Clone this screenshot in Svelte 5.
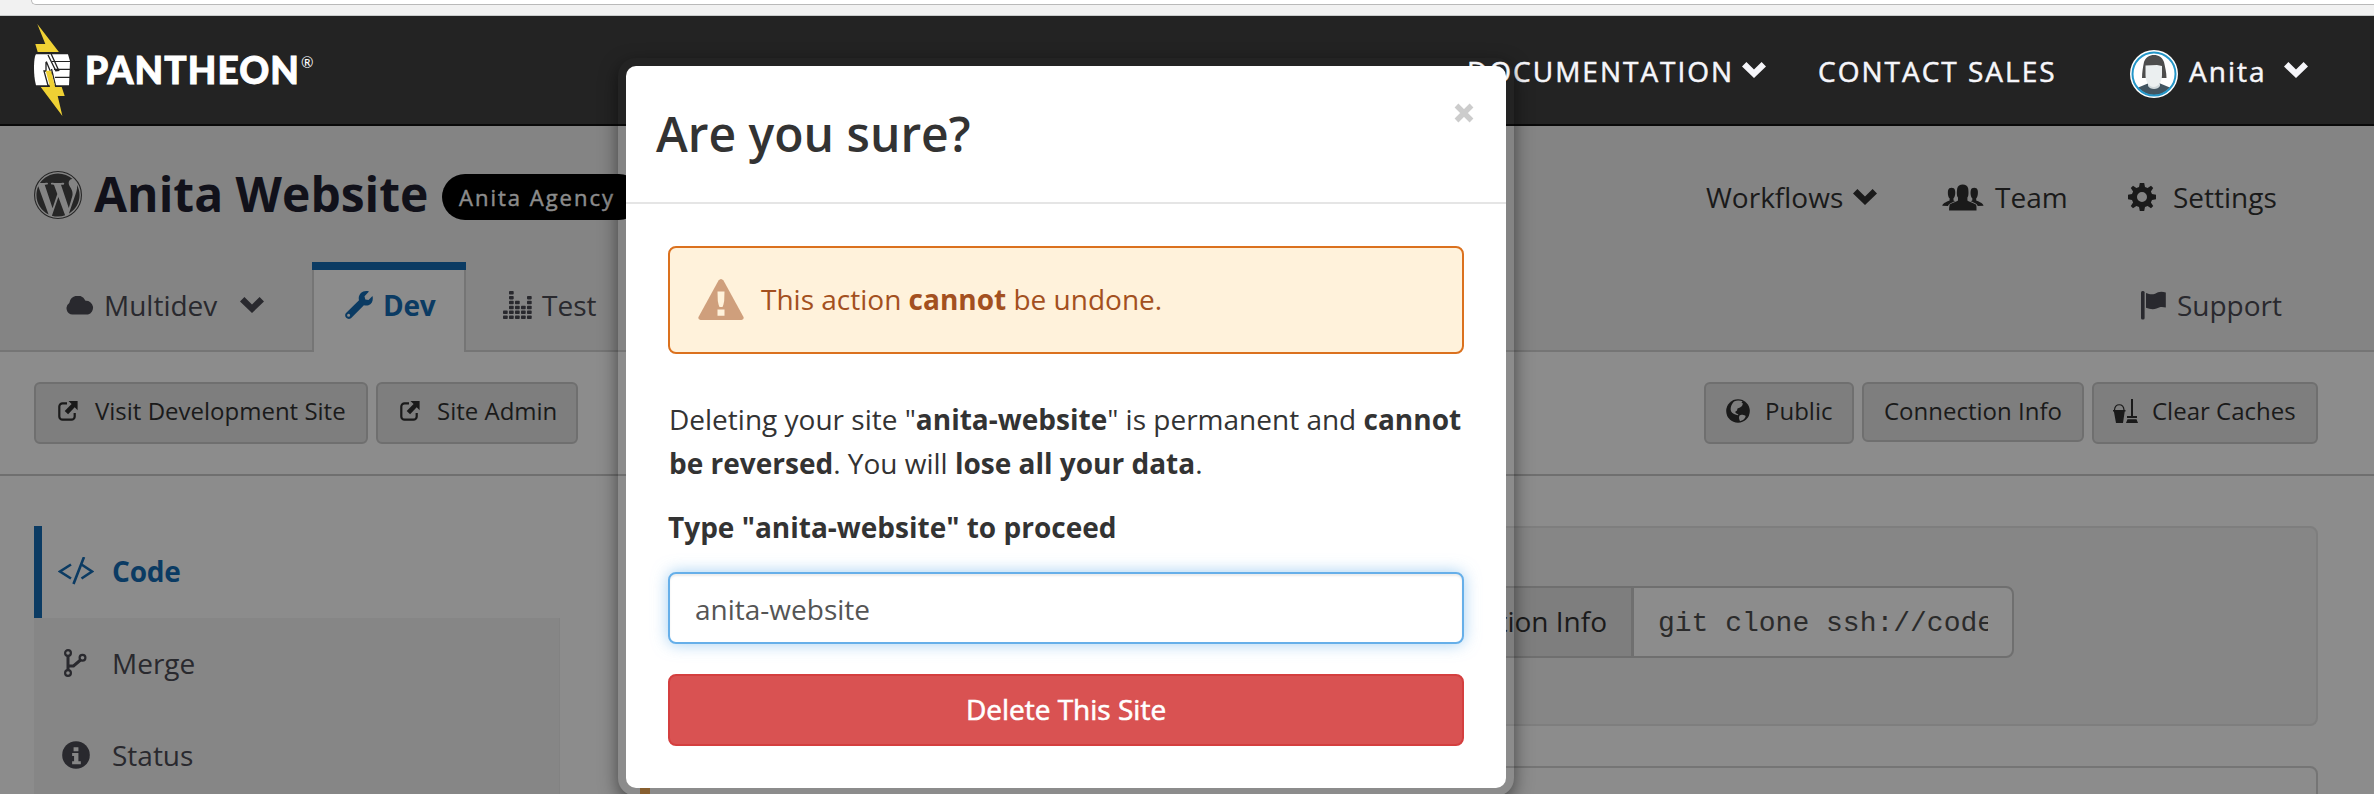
<script>
  let siteName = $state('anita-website');
</script>

{#snippet chevron()}
  <svg class="chev" viewBox="0 0 24 16"><path d="M0 4.6 4.4 0 12 7.4 19.6 0 24 4.6 12 16z" /></svg>
{/snippet}

{#snippet external()}
  <svg class="ext" viewBox="0 0 20 20">
    <path d="M9 2.3H4.6A3.3 3.3 0 0 0 1.3 5.6v9.8a3.3 3.3 0 0 0 3.3 3.3h8.8a3.3 3.3 0 0 0 3.3-3.3V12" fill="none" stroke="currentColor" stroke-width="2.2" />
    <path d="M10.5 0H19.6v9.2l-2.9-2.9-6.6 6.9-3.4-3.3 6.9-6.8z" />
  </svg>
{/snippet}

<div class="screen">
  <div class="chrome"><div class="address"></div></div>

  <header class="top">
    <svg class="bolt" viewBox="0 0 37 92">
      <path fill="#efd134" d="M3.3 0 24.9 28H3.7L1.3 20h10z" />
      <path fill="#fff" d="M2 30.2h32l2 7-1 24H2C.6 56 0 50 0 44s.6-12 2-13.8z" />
      <path d="M18 37.5h19M20 45.4h17M21 53.3h15" stroke="#232323" stroke-width="1.2" />
      <path d="m17.2 30 7.5 16.4-2.9.3L14 31M12.3 37.5l5.400 13M12 38v9h-2l4 14.5h7.5L17.5 45" stroke="#232323" stroke-width="1.3" fill="none" />
      <path fill="#efd134" d="M11.7 46.8H17L21.2 63h6.5l3 9h-7l4.700 20L6.700 63H16z" />
    </svg>
    <span class="wordmark">PANTHEON</span><span class="reg">®</span>
    <nav class="top-nav">
      <a class="doc"><span class="t">DOCUMENTATION</span>{@render chevron()}</a>
      <a class="sales"><span class="t">CONTACT SALES</span></a>
      <a class="user">
        <svg class="avatar" viewBox="0 0 48 48">
          <defs><clipPath id="face"><circle cx="24" cy="24" r="21" /></clipPath></defs>
          <circle cx="24" cy="24" r="24" fill="#fff" />
          <g clip-path="url(#face)">
            <path d="M7 38 19 33h10l12 5v10H7z" fill="#435561" />
            <path d="M12 28c0-6 1-11 2-16 1.500-4.500 5.500-7 10-7s8.500 2.500 10 7c1 5 2.500 10 2.500 16z" fill="#4d4d4d" />
            <path d="M18 34h12v2c-2 4-10 4-12 0z" fill="#cfd7da" />
            <path d="M15.500 15.500 27 15l5 1v9c0 7-3.500 12-8.300 12s-8.200-5-8.200-12z" fill="#ebeff0" />
          </g>
          <circle cx="24" cy="24" r="21.500" fill="none" stroke="#2496c8" stroke-width="2" />
        </svg>
        <span class="t">Anita</span>{@render chevron()}
      </a>
    </nav>
  </header>

  <section class="masthead">
    <div class="title-row">
      <svg class="wp" viewBox="0 0 24 24"><circle cx="12" cy="12" r="11.720" fill="none" stroke="currentColor" stroke-width=".560" /><path d="M21.469 6.825c.84 1.537 1.318 3.3 1.318 5.175 0 3.979-2.156 7.456-5.363 9.325l3.295-9.527c.615-1.54.82-2.771.82-3.864 0-.405-.026-.78-.07-1.11m-7.981.105c.647-.03 1.232-.105 1.232-.105.582-.075.514-.93-.067-.899 0 0-1.755.135-2.88.135-1.064 0-2.85-.15-2.85-.15-.585-.03-.661.855-.075.885 0 0 .54.061 1.125.09l1.68 4.605-2.37 7.08L5.354 6.9c.649-.03 1.234-.1 1.234-.1.585-.075.516-.93-.065-.896 0 0-1.746.138-2.874.138-.2 0-.438-.008-.69-.015C4.911 3.15 8.235 1.215 12 1.215c2.809 0 5.365 1.072 7.286 2.833-.046-.003-.091-.009-.141-.009-1.06 0-1.812.923-1.812 1.914 0 .89.513 1.643 1.06 2.531.411.72.89 1.643.89 2.977 0 .915-.354 1.994-.821 3.479l-1.075 3.585-3.9-11.61zM12 22.784c-1.059 0-2.081-.153-3.048-.437l3.237-9.406 3.315 9.087c.024.053.05.101.078.149-1.12.393-2.325.609-3.582.609M1.211 12c0-1.564.336-3.05.935-4.39L7.29 21.709C3.694 19.96 1.212 16.271 1.211 12" /></svg>
      <h1>Anita Website</h1>
      <span class="badge">Anita Agency</span>
      <nav class="site-nav">
        <a class="wf"><span class="t">Workflows</span>{@render chevron()}</a>
        <a class="team">
          <svg viewBox="0 0 42 27">
            <path d="M7.500 22v-1.500C12 18 15 17.500 16 16.500v-3C14.800 12.500 14.600 9 15.200 4.500 15.700 1.500 18 .4 20.700.4s5 1.100 5.500 4.100c.6 4.500.4 8-.8 9v3c1 1 4 1.500 8.500 4 .8 1 .6 3 .6 6H7.100c0-2 0-3.500.4-4.500z" />
            <path d="M.3 21.800c0-2.300 4-4 7.300-5.300v-2.200C5.800 13 5.700 8.500 6 6.700c.4-2.300 2-2.900 3.600-2.900s3.200.6 3.500 2.900c.4 2.300 0 6.500-1.600 7.600v2.200l1.700.8C8.500 19 7 20 6 22z" />
            <path d="M41.500 21.800c0-2.300-4-4-7.300-5.300v-2.200c1.800-1.300 1.900-5.800 1.600-7.600-.4-2.300-2-2.900-3.600-2.900s-3.200.6-3.500 2.900c-.4 2.300 0 6.500 1.600 7.600v2.200l-1.700.8c4.700 1.700 6.200 2.700 7.200 4.700z" />
          </svg>
          <span class="t">Team</span>
        </a>
        <a class="settings">
          <svg viewBox="0 0 28 28"><path fill-rule="evenodd" d="M11.800 0h4.400l.8 4 2.600 1.100L23 2.800 25.200 5l-2.300 3.400L24 11l4 .8v4.400l-4 .8-1.100 2.600 2.300 3.400-2.200 2.200-3.400-2.300L17 24l-.8 4h-4.400L11 24l-2.600-1.100L5 25.200 2.800 23l2.300-3.400L4 17l-4-.8v-4.400L4 11l1.100-2.600L2.800 5 5 2.800l3.400 2.300L11 4zM14 9a5 5 0 1 0 0 10 5 5 0 0 0 0-10z" /></svg>
          <span class="t">Settings</span>
        </a>
      </nav>
    </div>
    <div class="tabs">
      <a class="tab multidev">
        <svg viewBox="0 0 29 19"><path d="M6.500 18.500A6.300 6.300 0 0 1 3.300 7 8.500 8.500 0 0 1 19.500 4.800 7 7 0 0 1 22 18.500z" /></svg>
        <span class="t">Multidev</span>{@render chevron()}
      </a>
      <a class="tab active">
        <svg viewBox="0 0 28 28"><path fill-rule="evenodd" d="M24 .6 19.500 5.200l.8 3.200 3.200.7L27.500 5c1 4.200-.5 8-4 9.200-1.800.6-3.200.4-4.600 0L6 27.200c-3.600 2.300-7.400-1.600-5.200-5L14 9.200c-1.600-5.600 4-10.800 10-8.600zM3.600 22.700a1.500 1.500 0 1 0 0 3 1.500 1.500 0 0 0 0-3z" /></svg>
        <span class="t">Dev</span>
      </a>
      <a class="tab test">
        <svg viewBox="0 0 29 28">
          {#each [2, 6, 4, 3, 5] as n, c}
            {#each Array(n) as _, r}
              <rect x={c * 6} y={24.5 - r * 4.9} width="4.7" height="3.5" rx=".8" />
            {/each}
          {/each}
        </svg>
        <span class="t">Test</span>
      </a>
      <a class="tab support">
        <svg viewBox="0 0 25 29"><rect width="3.600" height="28.500" rx="1.500" /><path d="M5 2c6 2.500 9 .8 12-.8 3-1 5-.5 7.800.2v15.200c-4-1.200-6.500-.6-9.300 1-3.500 1.200-7 .5-10.500-.8z" /></svg>
        <span class="t">Support</span>
      </a>
    </div>
  </section>

  <section class="toolbar">
    <button class="btn visit">{@render external()}<span class="t">Visit Development Site</span></button>
    <button class="btn admin">{@render external()}<span class="t">Site Admin</span></button>
    <span class="grow"></span>
    <button class="btn public">
      <svg class="globe" viewBox="0 0 24 24"><circle cx="12" cy="12" r="11.800" /><path fill="#7e7e7e" d="M8 2.500c3-1.600 6-1.200 8.500-.2l-1 1.500 1.500.7-1 2.500-2 1.500-2.500 1-.5 2-2 1.500 1.500 1.500 2 1-1 .8-3.500-1.300C5 13.500 4.200 11 4.800 8.500 5.200 6 6.500 4 8 2.500zM13.500 16.500c2-1.200 3.500-.5 6 .3.500 1.200-.8 3-2.500 4.200l-3 1.200c-.8-2-1.500-3.700-.5-5.700z" /></svg>
      <span class="t">Public</span>
    </button>
    <button class="btn info"><span class="t">Connection Info</span></button>
    <button class="btn clear">
      <svg class="bucket" viewBox="0 0 25 24"><path d="M0 11h12.500v1.600h-.8L10 24H3L.9 12.600H0zM18 0h2v17h4v2H14v-2h4zM14.500 20.200h9L25 24H13z" /><path d="M1.500 11C2 4 10.500 4 11 11" fill="none" stroke="currentColor" stroke-width="1.2" /></svg>
      <span class="t">Clear Caches</span>
    </button>
  </section>

  <section class="content">
    <aside>
      <a class="side on">
        <svg viewBox="0 0 36 28"><path d="M13 8 2 15l11 7M23.500 8 34 15l-10.500 7M26 .5 15.500 27.500" transform="translate(0 -.5)" fill="none" stroke="currentColor" stroke-width="2.6" /></svg>
        <span class="t">Code</span>
      </a>
      <a class="side">
        <svg viewBox="0 0 36 28"><g fill="none" stroke="currentColor" stroke-width="2.2"><circle cx="10" cy="4" r="2.9" /><circle cx="10" cy="24" r="2.9" /><circle cx="24.5" cy="8.8" r="2.9" /></g><path d="M10 7v14M10 17h5.500l7-6" fill="none" stroke="currentColor" stroke-width="3" /></svg>
        <span class="t">Merge</span>
      </a>
      <a class="side">
        <svg viewBox="0 0 36 29"><circle cx="18" cy="14.5" r="14.3" /><path fill="#868686" d="M15.500 6.500h5v4h-5zM14 12.500h6.500v8.500H23v3h-9v-3h2v-5.500h-2z" /></svg>
        <span class="t">Status</span>
      </a>
    </aside>
    <main>
      <div class="panel">
        <div class="group"><span class="label">Connection Info</span><span class="field"><span class="clone">git clone ssh://code</span></span></div>
      </div>
      <div class="panel second"></div>
    </main>
  </section>

  <div class="dialog">
    <div class="box">
      <div class="head">
        <h2>Are you sure?</h2>
        <svg class="close" viewBox="0 0 20 20"><path d="m2.500 2.500 15 15M17.500 2.500l-15 15" stroke="#ccc" stroke-width="5.4" /></svg>
      </div>
      <div class="body">
        <div class="alert">
          <svg viewBox="0 0 46 41"><path fill="#cf9f7c" d="M20.500 1.500q2.500-3 5 0L45.500 38q.8 2.800-2 3h-41q-2.800-.2-2-3z" /><path fill="#fff2db" d="M19.500 12.500h7l-.3 9.500q-.7 4-1.700 6h-3q-1-2-1.700-6zM19.500 30.500h7v6.300h-7z" /></svg>
          <span>This action <b>cannot</b> be undone.</span>
        </div>
        <p>Deleting your site "<b>anita-website</b>" is permanent and <b>cannot</b><br /><b>be reversed</b>. You will <b>lose all your data</b>.</p>
        <label for="confirm">Type "anita-website" to proceed</label>
        <input id="confirm" bind:value={siteName} />
        <button class="delete">Delete This Site</button>
      </div>
    </div>
  </div>
  <div class="warn-edge"></div>
</div>

<style>
  :global(body) { background: #8c8c8c; overflow: hidden; }
  .screen { position: relative; width: 2374px; height: 794px; overflow: hidden; background: #8c8c8c; font-family: 'Open Sans', 'Noto Sans', sans-serif; font-size: 28px; color: #1a1a1a; }
  .screen * { box-sizing: border-box; }
  svg { display: block; flex: none; fill: currentColor; }
  a { display: flex; align-items: center; }
  .t { white-space: nowrap; }
  .chev { width: 24px; height: 16px; }
  button { font-family: inherit; margin: 0; }

  .chrome { height: 16px; background: #f1f1f1; border-bottom: 1px solid #c9cccc; padding-left: 31px; }
  .address { height: 5px; background: #fff; border: 1px solid #b9b9b9; border-width: 0 0 1px 1px; border-bottom-left-radius: 5px; }

  .top { height: 110px; background: #232323; border-bottom: 2px solid #090909; display: flex; align-items: center; padding-left: 34px; color: #f6f6fa; }
  .bolt { width: 37px; height: 92px; }
  .wordmark { font: 900 37px/40px Lato, sans-serif; color: #fff; margin-left: 14px; width: 216px; letter-spacing: 1.100px; -webkit-text-stroke: 0.900px #fff; }
  .reg { font: 15px/20px Lato, sans-serif; color: #fff; align-self: flex-start; margin-top: 36px; }
  .top-nav { margin-left: auto; padding-right: 66px; display: grid; grid-template-columns: 351px 312px 178px; letter-spacing: 2px; padding-top: 2px; -webkit-text-stroke: 0.500px currentColor; }
  .top-nav .chev { margin-bottom: 2px; }
  .doc .t { width: 275px; }
  .avatar { width: 48px; height: 48px; margin: 5px 11px 0 0; }
  .user .chev { margin-left: auto; }

  .masthead { height: 226px; background: #848484; }
  .title-row { height: 136px; display: flex; align-items: center; padding: 2px 34px 0; }
  .wp { width: 48px; height: 48px; color: #262626; margin-right: 12px; }
  h1 { margin: 0 0 3px; font-size: 48px; line-height: 60px; font-weight: 700; color: #11111a; width: 348px; white-space: nowrap; }
  .badge { height: 46px; width: 200px; border-radius: 23px; background: #000; color: #8c8c8c; font-size: 22px; line-height: 46px; padding-left: 17px; letter-spacing: 2px; margin-top: 4px; white-space: nowrap; -webkit-text-stroke: 0.500px currentColor; }
  .site-nav { margin-left: auto; padding-right: 22px; display: grid; grid-template-columns: 236px 186px 190px; margin-top: 4px; }
  .wf .t { width: 147px; }
  .team svg { width: 42px; height: 27px; margin-right: 11px; }
  .settings svg { width: 28px; height: 28px; margin-right: 17px; }

  .tabs { height: 90px; border-bottom: 2px solid #757575; display: flex; padding-right: 92px; color: #29292e; }
  .tab { height: 90px; padding-bottom: 4px; }
  .multidev { width: 312px; padding-left: 66px; }
  .multidev svg:first-child { width: 29px; height: 19px; margin-right: 9px; }
  .multidev .t { width: 136px; }
  .active { width: 154px; background: #8c8c8c; border: solid #757575; border-width: 0 2px; box-shadow: inset 0 8px #0b3b63; border-image: linear-gradient(#0b3b63 8px, #757575 8px) 0 2; color: #0b3b63; font-weight: 700; letter-spacing: -0.300px; padding-left: 31px; }
  .active svg { width: 28px; height: 28px; margin-right: 10px; }
  .test { padding-left: 37px; }
  .test svg { width: 29px; height: 28px; margin-right: 10px; }
  .support { margin-left: auto; }
  .support svg { width: 25px; height: 29px; margin-right: 11px; }

  .toolbar { height: 124px; padding: 30px 56px 0 34px; border-bottom: 2px solid #6f6f6f; display: flex; align-items: flex-start; gap: 8px; }
  .grow { flex: 1; }
  .btn { height: 62px; border: 2px solid #6f6f6f; border-radius: 6px; background: #7e7e7e; color: #1a1a1a; font-size: 24px; line-height: 54px; padding: 0 0 4px; display: flex; align-items: center; }
  .ext { width: 20px; height: 20px; margin: 0 17px 0 22px; }
  .visit { width: 334px; }
  .admin { width: 202px; }
  .public { width: 150px; }
  .globe { width: 24px; height: 24px; margin: 0 15px 0 20px; }
  .info { width: 222px; height: 60px; padding: 0 0 2px 20px; }
  .clear { width: 226px; }
  .bucket { width: 25px; height: 24px; margin: 0 14px 0 19px; }

  .content { display: flex; padding: 50px 56px 0 34px; gap: 80px; }
  aside { width: 526px; }
  .side { height: 92px; background: #868686; border-right: 1px solid #828282; padding: 0 0 2px 24px; color: #29292e; }
  .side.on { background: none; border-right: 0; border-left: 8px solid #0b3b63; color: #0b3b63; font-weight: 700; letter-spacing: -0.200px; padding-left: 16px; }
  .side svg { width: 36px; height: 28px; margin-right: 18px; }
  main { flex: 1; display: flex; flex-direction: column; gap: 40px; }
  .panel { height: 200px; border: 2px solid #7e7e7e; border-radius: 8px; background: #868686; padding: 58px 302px 0 0; }
  .second { background: none; border-color: #757575; padding: 0; }
  .group { display: flex; justify-content: flex-end; height: 72px; line-height: 67px; }
  .label { border: 2px solid #6f6f6f; border-right-width: 1px; background: #7e7e7e; padding: 0 24px 0 26px; border-radius: 8px 0 0 8px; }
  .field { width: 382px; border: 2px solid #6f6f6f; border-radius: 0 8px 8px 0; padding: 0 24px; background: #8c8c8c; }
  .clone { display: block; font: 28px/72px 'Liberation Mono', monospace; height: 68px; color: #2b2b2b; white-space: nowrap; overflow: hidden; }

  .dialog { position: absolute; left: 618px; top: 58px; width: 896px; padding: 8px; border-radius: 18px; box-shadow: 0 6px 18px rgba(0, 0, 0, 0.5); }
  .box { height: 722px; background: #fff; border-radius: 10px; color: #333; }
  .head { height: 138px; border-bottom: 2px solid #e5e5e5; display: flex; justify-content: space-between; padding: 35px 32px 0 30px; }
  h2 { margin: 0; font-size: 48px; line-height: 66px; font-weight: 600; white-space: nowrap; }
  .close { width: 20px; height: 20px; margin-top: 2px; }
  .body { padding: 42px; display: flex; flex-direction: column; }
  .alert { height: 108px; border: 2px solid #db711e; border-radius: 8px; background: #fff2db; color: #a35020; display: flex; align-items: center; padding: 0 0 2px 28px; }
  .alert svg { width: 46px; height: 41px; margin-right: 17px; }
  p { margin: 43px 0 0 1px; line-height: 44px; white-space: nowrap; }
  label { font-weight: 700; line-height: 44px; margin-top: 20px; white-space: nowrap; }
  input { margin-top: 23px; height: 72px; border: 2px solid #66afe9; border-radius: 8px; box-shadow: 0 0 16px rgba(102, 175, 233, 0.6), inset 0 2px 2px rgba(0, 0, 0, 0.075); padding: 2px 24px 0 25px; font: 28px 'Open Sans', sans-serif; color: #555; outline: none; }
  .delete { margin-top: 30px; height: 72px; border: 2px solid #d43f3f; border-radius: 8px; background: #d95252; color: #fff; font-size: 28px; -webkit-text-stroke: 0.600px #fff; padding: 0 0 2px; }
  .warn-edge { position: absolute; left: 640px; top: 788px; width: 10px; height: 6px; background: #875f30; }
</style>
